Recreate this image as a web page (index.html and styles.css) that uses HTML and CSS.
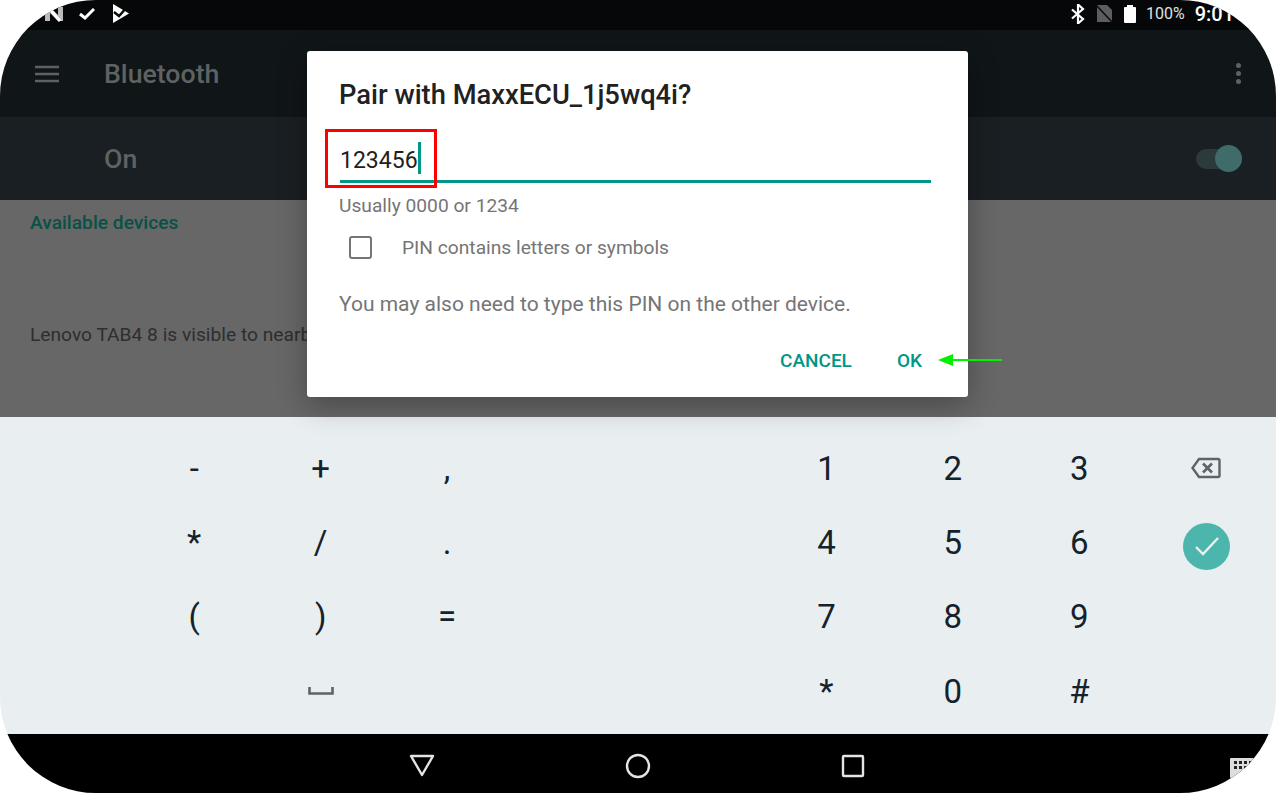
FILE: index.html
```html
<!DOCTYPE html>
<html lang="en">
<head>
    <meta charset="UTF-8">
    <meta name="viewport" content="width=device-width, initial-scale=1.0">
    <title>Bluetooth</title>
    <link rel="stylesheet" href="styles.css">
</head>
<body>
    <div class="screen">
        <div class="status-bar">
            <div class="status-left">
                <svg class="icon-n" width="20" height="16" viewBox="0 0 20 16"><path d="M1 1h5l8 8V1h5v14h-5L6 7v8H1z" fill="#bbb"/><path d="M4 1l12 14" stroke="#fff" stroke-width="3"/></svg>
                <svg class="icon-check" width="16" height="12" viewBox="0 0 16 12"><path d="M1 6l5 4 9-9" fill="none" stroke="#fff" stroke-width="3"/></svg>
                <svg class="icon-flag" width="18" height="19" viewBox="0 0 18 19"><path d="M1 0l16 9.5L1 19z" fill="#fff"/><path d="M2 8l5 4 9-10" fill="none" stroke="#090909" stroke-width="2.4"/></svg>
            </div>
            <div class="status-right">
                <svg width="14" height="20" viewBox="0 0 14 20"><path d="M1 5.500l11 9.500-5 4.500V.5l5 4.500L1 14.500" fill="none" stroke="#fff" stroke-width="2.2"/></svg>
                <svg width="17" height="18" viewBox="0 0 17 18"><path d="M1 0h10l5 5v12H1z" fill="#5d5d5d"/><path d="M0 0l17 18" stroke="#0a0a0a" stroke-width="1.5"/></svg>
                <div class="battery"></div>
                <span class="percent">100%</span>
                <span class="clock">9:01</span>
            </div>
        </div>

        <div class="toolbar">
            <svg class="menu-icon" width="24" height="18" viewBox="0 0 24 18"><path d="M0 2h24M0 9h24M0 16h24" stroke="#5e6162" stroke-width="2.4"/></svg>
            <span class="toolbar-title">Bluetooth</span>
            <div class="more">
                <span class="dot"></span>
                <span class="dot"></span>
                <span class="dot"></span>
            </div>
        </div>

        <div class="switch-bar">
            <span class="switch-label">On</span>
            <div class="switch">
                <div class="switch-thumb"></div>
            </div>
        </div>

        <div class="content">
            <div class="section-title">Available devices</div>
            <div class="visible-text">Lenovo TAB4 8 is visible to nearby devices while Bluetooth settings is open.</div>
        </div>

        <div class="keyboard">
            <div class="key">-</div>
            <div class="key">+</div>
            <div class="key">,</div>
            <div class="key"></div>
            <div class="key"></div>
            <div class="key">1</div>
            <div class="key">2</div>
            <div class="key">3</div>
            <div class="key">
                <svg width="30" height="22" viewBox="0 0 30 22"><path d="M8 2h19a1.5 1.5 0 0 1 1.5 1.5v15a1.500 1.500 0 0 1-1.5 1.5H8L1.500 11z" fill="none" stroke="#5b6469" stroke-width="2.4"/><path d="M12 6.500l9 9M21 6.500l-9 9" stroke="#5b6469" stroke-width="2.6"/></svg>
            </div>

            <div class="key">*</div>
            <div class="key">/</div>
            <div class="key">.</div>
            <div class="key"></div>
            <div class="key"></div>
            <div class="key">4</div>
            <div class="key">5</div>
            <div class="key">6</div>
            <div class="key">
                <div class="enter-key">
                    <svg width="26" height="22" viewBox="0 0 26 22"><path d="M2 12l7 7L24 3" fill="none" stroke="#e9f3f2" stroke-width="2.4"/></svg>
                </div>
            </div>

            <div class="key">(</div>
            <div class="key">)</div>
            <div class="key">=</div>
            <div class="key"></div>
            <div class="key"></div>
            <div class="key">7</div>
            <div class="key">8</div>
            <div class="key">9</div>
            <div class="key"></div>

            <div class="key"></div>
            <div class="key">
                <svg width="26" height="8" viewBox="0 0 26 8"><path d="M1.5 0v6.500h23V0" fill="none" stroke="#5b6469" stroke-width="2.6"/></svg>
            </div>
            <div class="key"></div>
            <div class="key"></div>
            <div class="key"></div>
            <div class="key">*</div>
            <div class="key">0</div>
            <div class="key">#</div>
            <div class="key"></div>
        </div>

        <div class="nav-bar">
            <svg width="26" height="24" viewBox="0 0 26 24"><path d="M2 2h22L13 21z" fill="none" stroke="#e4e4e4" stroke-width="2.4" stroke-linejoin="round"/></svg>
            <svg width="26" height="26" viewBox="0 0 26 26"><circle cx="13" cy="13" r="11" fill="none" stroke="#e4e4e4" stroke-width="2.4"/></svg>
            <svg width="24" height="24" viewBox="0 0 24 24"><rect x="2" y="2" width="20" height="20" rx="1" fill="none" stroke="#e4e4e4" stroke-width="2.4"/></svg>
        </div>

        <svg class="kb-switch" width="24" height="20" viewBox="0 0 24 20">
            <rect width="24" height="20" rx="1" fill="#ddd"/>
            <path d="M4 3h3v3H4zM9 3h3v3H9zM14 3h3v3h-3zM19 3h3v3h-3zM4 8h3v3H4zM9 8h3v3H9zM14 8h3v3h-3zM19 8h3v3h-3z" fill="#222"/>
        </svg>

        <div class="dialog">
            <h2 class="dialog-title">Pair with MaxxECU_1j5wq4i?</h2>
            <div class="pin-input">
                <span class="pin-text">123456</span><span class="caret"></span>
            </div>
            <div class="hint">Usually 0000 or 1234</div>
            <div class="checkbox-row">
                <span class="checkbox"></span>
                <span>PIN contains letters or symbols</span>
            </div>
            <p class="note">You may also need to type this PIN on the other device.</p>
            <div class="dialog-buttons">
                <span class="dialog-button">CANCEL</span>
                <span class="dialog-button">OK</span>
            </div>
        </div>

        <div class="red-box"></div>
        <svg class="green-arrow" width="64" height="12" viewBox="0 0 64 12"><path d="M0 6l15-6v12z" fill="#00f000"/><path d="M12 6h52" stroke="#00f000" stroke-width="2"/></svg>
    </div>
</body>
</html>
```

FILE: styles.css
```css
html, body {
    margin: 0;
    background-color: white;
}
.screen {
    position: relative;
    width: 1276px;
    height: 793px;
    overflow: hidden;
    border-radius: 96px;
    display: flex;
    flex-direction: column;
    font-family: Roboto, sans-serif;
}
.status-bar {
    height: 30px;
    box-sizing: border-box;
    padding-bottom: 3px;
    background-color: #060708;
    display: flex;
    justify-content: space-between;
    align-items: center;
    color: white;
}
.status-left {
    display: flex;
    align-items: center;
    padding-left: 44px;
}
.icon-check {
    margin-left: 15px;
}
.icon-flag {
    margin-left: 17px;
}
.status-right {
    display: flex;
    align-items: center;
    padding-right: 42px;
}
.status-right svg {
    margin-right: 11px;
}
.battery {
    position: relative;
    width: 12px;
    height: 16px;
    margin-top: 2px;
    background-color: white;
    margin-right: 10px;
    border-radius: 1px;
}
.battery::before {
    content: "";
    position: absolute;
    top: -2px;
    left: 3px;
    width: 6px;
    height: 2px;
    background-color: white;
}
.percent {
    font-size: 16px;
    color: #e0e0e0;
    margin-right: 10px;
}
.clock {
    font-size: 20px;
    font-weight: 500;
}
.toolbar {
    height: 87px;
    background-color: #101518;
    display: flex;
    align-items: center;
    padding: 0 35px 0 35px;
}
.menu-icon {
    margin-right: 45px;
}
.toolbar-title {
    font-size: 26.7px;
    font-weight: 500;
    color: #5f6263;
    flex: 1;
}
.more {
    display: flex;
    flex-direction: column;
    gap: 3px;
}
.dot {
    width: 5px;
    height: 5px;
    border-radius: 50%;
    background-color: #5f6263;
}
.switch-bar {
    height: 83px;
    background-color: #1a1f23;
    display: flex;
    align-items: center;
    justify-content: space-between;
    padding: 0 34px 0 104px;
}
.switch-label {
    font-size: 26.7px;
    font-weight: 500;
    color: #5f6263;
}
.switch {
    width: 46px;
    height: 20px;
    border-radius: 10px;
    background-color: #2c3a3b;
    display: flex;
    align-items: center;
    justify-content: flex-end;
}
.switch-thumb {
    width: 27px;
    height: 27px;
    border-radius: 50%;
    background-color: #3f6b6b;
}
.content {
    height: 217px;
    background-color: #676767;
    padding: 0 30px;
    color: #2e2e2e;
}
.section-title {
    font-size: 19.2px;
    font-weight: 500;
    color: #0a5046;
    margin-top: 11px;
}
.visible-text {
    font-size: 19.2px;
    margin-top: 89px;
}
.keyboard {
    height: 317px;
    box-sizing: border-box;
    background-color: #e9eef1;
    padding: 14px 7px 0 131px;
    display: grid;
    grid-template-columns: repeat(9, 1fr);
    grid-auto-rows: 74.3px;
    color: #14222c;
    font-size: 33px;
}
.key {
    display: flex;
    align-items: center;
    justify-content: center;
}
.enter-key {
    width: 47px;
    height: 47px;
    margin-top: 8px;
    margin-left: 2px;
    border-radius: 50%;
    background-color: #4db6ac;
    display: flex;
    align-items: center;
    justify-content: center;
}
.nav-bar {
    height: 59px;
    box-sizing: border-box;
    padding: 5px 3px 0 0;
    background-color: black;
    display: flex;
    justify-content: center;
    align-items: center;
    gap: 190px;
}
.kb-switch {
    position: absolute;
    left: 1230px;
    top: 758px;
}
.dialog {
    position: absolute;
    left: 307px;
    top: 51px;
    width: 661px;
    height: 346px;
    box-sizing: border-box;
    background-color: white;
    border-radius: 3px;
    padding: 28px 37px 0 32px;
    box-shadow: 0 8px 30px rgba(0, 0, 0, 0.3);
    color: #757575;
}
.dialog-title {
    margin: 0;
    font-size: 27.3px;
    font-weight: 500;
    color: #212121;
    line-height: 32px;
}
.pin-input {
    margin-top: 24px;
    height: 45px;
    margin-left: 1px;
    border-bottom: 3px solid #009688;
    font-size: 23px;
    color: #212121;
    display: flex;
    align-items: center;
}
.pin-text {
    margin-top: 5px;
}
.caret {
    width: 3px;
    height: 32px;
    background-color: #009688;
}
.hint {
    margin-top: 11px;
    font-size: 19.2px;
}
.checkbox-row {
    display: flex;
    align-items: center;
    margin-top: 19px;
    margin-left: 10px;
    font-size: 19.2px;
}
.checkbox {
    width: 19px;
    height: 19px;
    border: 2.5px solid #757575;
    border-radius: 3px;
    margin-right: 30px;
}
.note {
    margin: 33px 0 0;
    font-size: 21px;
}
.dialog-buttons {
    display: flex;
    justify-content: flex-end;
    gap: 45px;
    margin-top: 33px;
    padding-right: 9px;
}
.dialog-button {
    font-size: 19px;
    font-weight: 500;
    color: #009688;
}
.red-box {
    position: absolute;
    left: 325px;
    top: 129px;
    width: 106px;
    height: 53px;
    border: 3px solid #f00;
}
.green-arrow {
    position: absolute;
    left: 938px;
    top: 354px;
}
```
